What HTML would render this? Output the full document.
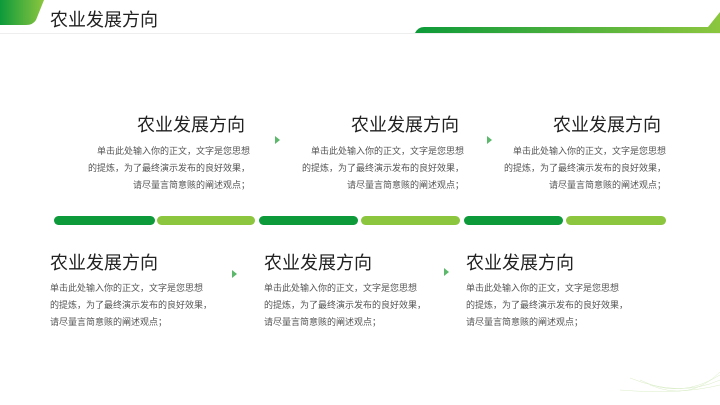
<!DOCTYPE html>
<html><head><meta charset="utf-8"><style>
body{margin:0;width:720px;height:405px;position:relative;overflow:hidden;background:#fff;font-family:"Liberation Sans","Noto Sans CJK SC",sans-serif;color:#222}
.a{position:absolute}
.t{font-size:18px;line-height:20px;white-space:nowrap}
.p{font-size:9px;line-height:17px;color:#555;white-space:nowrap}
.r{text-align:right;width:200px}
.bar{position:absolute;top:216px;height:9px;border-radius:5px}
.d{background:#0d9a3a}.l{background:#8cc63f}
.ar{position:absolute;width:0;height:0;border-left:5px solid #5cb86a;border-top:4px solid transparent;border-bottom:4px solid transparent}
</style></head><body>
<svg class="a" style="left:0;top:0" width="720" height="405">
<defs><linearGradient id="g" x1="0" x2="1"><stop offset="0" stop-color="#0d9a3a"/><stop offset="1" stop-color="#8cc63f"/></linearGradient></defs>
<path d="M0 0H44L36 20Q33 25 26 25H0Z" fill="url(#g)"/>
<path d="M415 33Q418 27 424 27H708L720 12V33Z" fill="url(#g)"/>
<line x1="0" y1="33.5" x2="720" y2="33.5" stroke="#eee"/>
<g stroke="#cfe8b8" fill="none" stroke-width="0.5" opacity="0.8">
<path d="M640 380Q680 400 720 375"/><path d="M630 378Q680 398 720 380"/><path d="M650 385Q690 402 720 372"/><path d="M620 390Q680 395 720 385"/>
</g></svg>
<div class="a t" style="left:50px;top:10px">农业发展方向</div>

<div class="a" style="left:45px;top:115px"><div class="t r">农业发展方向</div><div class="p r" style="margin-top:8px;width:205px">单击此处输入你的正文，文字是您思想<br>的提炼，为了最终演示发布的良好效果，<br>请尽量言简意赅的阐述观点；</div></div>
<div class="a" style="left:259px;top:115px"><div class="t r">农业发展方向</div><div class="p r" style="margin-top:8px;width:205px">单击此处输入你的正文，文字是您思想<br>的提炼，为了最终演示发布的良好效果，<br>请尽量言简意赅的阐述观点；</div></div>
<div class="a" style="left:461px;top:115px"><div class="t r">农业发展方向</div><div class="p r" style="margin-top:8px;width:205px">单击此处输入你的正文，文字是您思想<br>的提炼，为了最终演示发布的良好效果，<br>请尽量言简意赅的阐述观点；</div></div>

<div class="ar" style="left:275px;top:136px"></div>
<div class="ar" style="left:487px;top:136px"></div>
<div class="ar" style="left:232px;top:270px"></div>
<div class="ar" style="left:444px;top:268px"></div>

<div class="bar d" style="left:54px;width:101px"></div>
<div class="bar l" style="left:157px;width:98px"></div>
<div class="bar d" style="left:259px;width:99px"></div>
<div class="bar l" style="left:361px;width:99px"></div>
<div class="bar d" style="left:464px;width:99px"></div>
<div class="bar l" style="left:566px;width:100px"></div>

<div class="a" style="left:50px;top:253px"><div class="t">农业发展方向</div><div class="p" style="margin-top:7px">单击此处输入你的正文，文字是您思想<br>的提炼，为了最终演示发布的良好效果，<br>请尽量言简意赅的阐述观点；</div></div>
<div class="a" style="left:264px;top:253px"><div class="t">农业发展方向</div><div class="p" style="margin-top:7px">单击此处输入你的正文，文字是您思想<br>的提炼，为了最终演示发布的良好效果，<br>请尽量言简意赅的阐述观点；</div></div>
<div class="a" style="left:466px;top:253px"><div class="t">农业发展方向</div><div class="p" style="margin-top:7px">单击此处输入你的正文，文字是您思想<br>的提炼，为了最终演示发布的良好效果，<br>请尽量言简意赅的阐述观点；</div></div>
</body></html>
